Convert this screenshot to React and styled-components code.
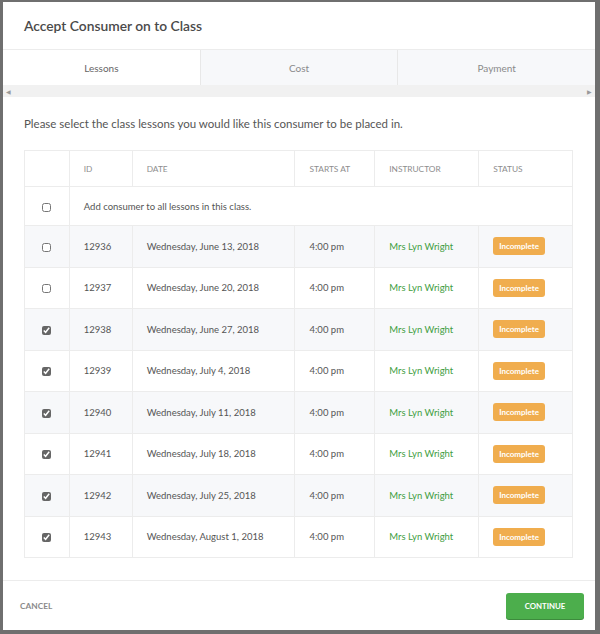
import React from 'react';
import styled, { createGlobalStyle } from 'styled-components';

const GlobalStyle = createGlobalStyle`
  html, body {
    margin: 0;
    padding: 0;
    background: #6f6f6f;
  }
  body {
    font-family: Lato, "Open Sans", "Liberation Sans", sans-serif;
    color: #555;
  }
`;

const Frame = styled.div`
  width: 600px;
  height: 634px;
  box-sizing: border-box;
  padding: 2px 5px 4px 3px;
  background: #6f6f6f;
`;

const Modal = styled.div`
  height: 100%;
  background: #fff;
  display: flex;
  flex-direction: column;
`;

const Header = styled.div`
  height: 47px;
  display: flex;
  align-items: center;
  padding: 0 21px;
`;

const Title = styled.h2`
  margin: 0;
  font-size: 13.8px;
  font-weight: 600;
  color: #4a4a4a;
`;

const Tabs = styled.div`
  display: flex;
  height: 35px;
  border-top: 1px solid #ececec;
`;

const Tab = styled.div`
  flex: 1;
  display: flex;
  align-items: center;
  justify-content: center;
  font-size: 10px;
  color: ${p => (p.active ? '#666' : '#8a8a8a')};
  background: ${p => (p.active ? '#fff' : '#f7f8fa')};
  border-left: ${p => (p.first ? 'none' : '1px solid #e8e8e8')};
`;

const ScrollBar = styled.div`
  height: 12px;
  background: #f1f1f1;
  display: flex;
  justify-content: space-between;
  align-items: center;
  padding: 0 3px;
  font-size: 6px;
  color: #999;
`;

const Body = styled.div`
  flex: 1;
  padding: 20px 21px 0;
`;

const Intro = styled.p`
  margin: 0 0 20px;
  font-size: 11.5px;
  color: #555;
`;

const Table = styled.table`
  width: 549px;
  border-collapse: collapse;
  border: 1px solid #ececec;
  font-size: 9.5px;
`;

const Th = styled.th`
  height: 36px;
  text-align: left;
  font-weight: 400;
  font-size: 8.3px;
  color: #8d8d8d;
  padding: 0 14px;
  border-left: 1px solid #ececec;
  width: ${p => p.w}px;
  box-sizing: border-box;
`;

const Row = styled.tr`
  height: ${p => p.h || 41.5}px;
  background: ${p => (p.striped ? '#f7f8fa' : '#fff')};
  border-top: 1px solid #ececec;
`;

const Td = styled.td`
  padding: 0 14px;
  border-left: 1px solid #ececec;
  color: ${p => p.color || '#555'};
  white-space: nowrap;
`;

const CheckCell = styled.td`
  text-align: center;
  padding: 0;
`;

const Check = styled.input.attrs({ type: 'checkbox', readOnly: true })`
  width: 9px;
  height: 9px;
  margin: 0;
  vertical-align: middle;
  accent-color: #666;
`;

const Badge = styled.span`
  display: inline-block;
  background: #f0ad4e;
  color: #fff;
  font-size: 8px;
  font-weight: 700;
  padding: 4px 6px;
  border-radius: 3px;
  line-height: 10px;
`;

const Footer = styled.div`
  height: 49px;
  border-top: 1px solid #ececec;
  display: flex;
  align-items: center;
  justify-content: space-between;
  padding: 0 11px 0 17px;
`;

const Cancel = styled.span`
  font-size: 8.3px;
  font-weight: 700;
  color: #8a8a8a;
`;

const Continue = styled.button`
  width: 78px;
  height: 26px;
  border: none;
  border-radius: 3px;
  background: #4cae4c;
  box-shadow: 0 1px 0 #3d8b3d;
  color: #fff;
  font-family: inherit;
  font-size: 7.8px;
  font-weight: 700;
`;

const lessons = [
  ['12936', 'Wednesday, June 13, 2018', false],
  ['12937', 'Wednesday, June 20, 2018', false],
  ['12938', 'Wednesday, June 27, 2018', true],
  ['12939', 'Wednesday, July 4, 2018', true],
  ['12940', 'Wednesday, July 11, 2018', true],
  ['12941', 'Wednesday, July 18, 2018', true],
  ['12942', 'Wednesday, July 25, 2018', true],
  ['12943', 'Wednesday, August 1, 2018', true],
];

export default function App() {
  return (
    <>
      <GlobalStyle />
      <Frame>
        <Modal>
          <Header>
            <Title>Accept Consumer on to Class</Title>
          </Header>
          <Tabs>
            <Tab active first>Lessons</Tab>
            <Tab>Cost</Tab>
            <Tab>Payment</Tab>
          </Tabs>
          <ScrollBar>
            <span>◀</span>
            <span>▶</span>
          </ScrollBar>
          <Body>
            <Intro>Please select the class lessons you would like this consumer to be placed in.</Intro>
            <Table>
              <thead>
                <tr>
                  <Th w={45} style={{ borderLeft: 'none' }} />
                  <Th w={63}>ID</Th>
                  <Th w={163}>DATE</Th>
                  <Th w={80}>STARTS AT</Th>
                  <Th w={104}>INSTRUCTOR</Th>
                  <Th w={94}>STATUS</Th>
                </tr>
              </thead>
              <tbody>
                <Row h={39}>
                  <CheckCell><Check checked={false} /></CheckCell>
                  <Td colSpan={5}>Add consumer to all lessons in this class.</Td>
                </Row>
                {lessons.map(([id, date, checked], i) => (
                  <Row key={id} striped={i % 2 === 0}>
                    <CheckCell><Check checked={checked} /></CheckCell>
                    <Td>{id}</Td>
                    <Td>{date}</Td>
                    <Td>4:00 pm</Td>
                    <Td color="#3f9e3f">Mrs Lyn Wright</Td>
                    <Td><Badge>Incomplete</Badge></Td>
                  </Row>
                ))}
              </tbody>
            </Table>
          </Body>
          <Footer>
            <Cancel>CANCEL</Cancel>
            <Continue>CONTINUE</Continue>
          </Footer>
        </Modal>
      </Frame>
    </>
  );
}
